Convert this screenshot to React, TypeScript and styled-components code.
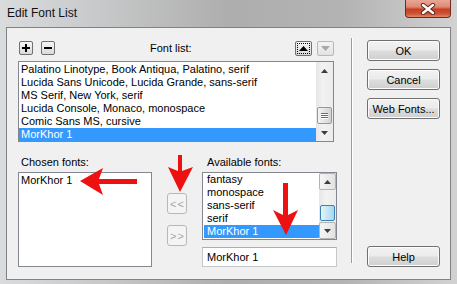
import React from 'react';
import styled, { createGlobalStyle } from 'styled-components';

const Global = createGlobalStyle`
  html, body { margin: 0; padding: 0; background: #fff; }
  body { font-family: "Liberation Sans", Arial, sans-serif; font-size: 11px; color: #000; }
  * { box-sizing: border-box; }
`;

const Window = styled.div`
  position: relative;
  width: 457px;
  height: 284px;
  display: flex;
  flex-direction: column;
  overflow: hidden;
  background: linear-gradient(to right, #d9dbdd 0%, #c9cacb 20%, #aeaeae 50%, #b3b3b3 75%, #d2d2d2 100%);
`;

const TitleBar = styled.div`
  height: 27px;
  display: flex;
  align-items: flex-start;
  padding-left: 7px;
  flex-shrink: 0;
`;

const Title = styled.div`
  margin-top: 6px;
  font-size: 12px;
  line-height: 14px;
  color: #111;
`;

const CloseButton = styled.div`
  margin-left: auto;
  margin-right: 6px;
  width: 46px;
  height: 18px;
  border: 1px solid #6e2a1e;
  border-top: none;
  border-radius: 0 0 4px 4px;
  background: linear-gradient(#e9a796 0%, #de8a73 40%, #c83e24 55%, #cc5336 80%, #e3876a 100%);
  display: flex;
  align-items: center;
  justify-content: center;
`;

const Client = styled.div`
  flex: 1;
  margin: 0 6px 5px 6px;
  border: 1px solid #7f8388;
  background: #f0f0f0;
  display: flex;
  padding: 12px 9px 12px 11px;
`;

const LeftCol = styled.div`
  width: 319px;
  flex-shrink: 0;
  display: flex;
  flex-direction: column;
`;

const Separator = styled.div`
  flex-shrink: 0;
  align-self: flex-start;
  margin: -2px 14px 0 14px;
  width: 2px;
  height: 225px;
  border-left: 1px solid #9d9d9d;
  border-right: 1px solid #ffffff;
`;

const RightCol = styled.div`
  width: 73px;
  flex-shrink: 0;
  display: flex;
  flex-direction: column;
  gap: 8px;
`;

const PushButton = styled.button<{ $bottom?: boolean }>`
  height: 21px;
  width: 73px;
  padding: 0;
  margin-top: ${(p) => (p.$bottom ? 'auto' : '0')};
  border: 1px solid #707070;
  border-radius: 3px;
  background: linear-gradient(#f2f2f2 0%, #ebebeb 48%, #dddddd 52%, #cfcfcf 100%);
  box-shadow: inset 0 0 0 1px #fcfcfc;
  font-family: "Liberation Sans", Arial, sans-serif;
  font-size: 11px;
  color: #000;
`;

const TopRow = styled.div`
  height: 16px;
  display: flex;
  align-items: center;
  padding-right: 3px;
`;

const SmallButton = styled.div<{ $first?: boolean }>`
  width: 14px;
  height: 14px;
  margin-left: ${(p) => (p.$first ? '1px' : '8px')};
  border: 1px solid #707070;
  border-radius: 2px;
  background: linear-gradient(#f6f6f6, #dadada);
  display: flex;
  align-items: center;
  justify-content: center;
`;

const Label = styled.div<{ $offset?: number }>`
  height: 13px;
  line-height: 13px;
  margin-left: ${(p) => p.$offset ?? 0}px;
  margin-bottom: 3px;
  white-space: nowrap;
`;

const TopLabel = styled(Label)`
  margin-bottom: 0;
`;

const OrderButton = styled.div<{ $disabled?: boolean; $gap?: boolean }>`
  width: 17px;
  height: 15px;
  margin-left: ${(p) => (p.$gap ? '5px' : 'auto')};
  border: 1px solid ${(p) => (p.$disabled ? '#b5b9bc' : '#707070')};
  border-radius: 2px;
  background: ${(p) => (p.$disabled ? 'linear-gradient(#f4f4f4, #e2e2e2)' : 'linear-gradient(#f6f6f6, #d8d8d8)')};
  outline: ${(p) => (p.$disabled ? 'none' : '1px dotted #000')};
  outline-offset: -3px;
  display: flex;
  align-items: center;
  justify-content: center;
`;

const ListBox = styled.div<{ $h: number; $w: number }>`
  width: ${(p) => p.$w}px;
  height: ${(p) => p.$h}px;
  border: 1px solid #828790;
  background: #fff;
  display: flex;
`;

const FontListBox = styled(ListBox)`
  margin-top: 5px;
`;

const Rows = styled.div<{ $pad: number }>`
  flex: 1;
  padding-top: ${(p) => p.$pad}px;
  overflow: hidden;
`;

const Row = styled.div<{ $selected?: boolean; $inset?: boolean }>`
  height: 13px;
  line-height: 13px;
  padding-left: ${(p) => (p.$inset ? '3px' : '2px')};
  margin-left: ${(p) => (p.$inset ? '1px' : '0')};
  white-space: nowrap;
  background: ${(p) => (p.$selected ? '#3399ff' : 'transparent')};
  color: ${(p) => (p.$selected ? '#fff' : '#000')};
`;

const ScrollBar = styled.div`
  width: 17px;
  display: flex;
  flex-direction: column;
  background: linear-gradient(to right, #e6e6e6, #f2f2f2 40%, #ececec);
`;

const ScrollArrow = styled.div<{ $boxed?: boolean }>`
  height: 17px;
  display: flex;
  align-items: center;
  justify-content: center;
  border: 1px solid ${(p) => (p.$boxed ? '#b4b4b4' : 'transparent')};
  border-radius: 2px;
  background: ${(p) => (p.$boxed ? 'linear-gradient(to right, #f6f6f6, #e2e2e2)' : 'transparent')};
`;

const Track = styled.div`
  flex: 1;
  position: relative;
`;

const Thumb = styled.div<{ $hover?: boolean; $top: number; $h: number }>`
  position: absolute;
  left: 1px;
  right: 1px;
  top: ${(p) => p.$top}px;
  height: ${(p) => p.$h}px;
  border: 1px solid ${(p) => (p.$hover ? '#3c7fb1' : '#979797')};
  border-radius: 2px;
  background: ${(p) =>
    p.$hover
      ? 'linear-gradient(to right, #e3f4fc, #c4e5f6 50%, #a8d7f2)'
      : 'linear-gradient(to right, #f4f4f4, #e4e4e4 50%, #d2d2d2)'};
  display: flex;
  flex-direction: column;
  align-items: center;
  justify-content: center;
  gap: 1px;
`;

const Grip = styled.div`
  width: 7px;
  height: 1px;
  background: #6a6a6a;
  box-shadow: 0 1px 0 #fff;
`;

const BottomGrid = styled.div`
  margin-top: 14px;
  display: grid;
  grid-template-columns: 134px 20px 135px;
  column-gap: 15px;
`;

const Column = styled.div`
  display: flex;
  flex-direction: column;
`;

const MoveColumn = styled.div`
  display: flex;
  flex-direction: column;
  padding-top: 37px;
  gap: 11px;
`;

const MoveButton = styled.div`
  width: 20px;
  height: 21px;
  border: 1px solid #b5b9bc;
  border-radius: 3px;
  background: #f4f4f4;
  color: #a6a6a6;
  display: flex;
  align-items: center;
  justify-content: center;
  font-size: 11px;
  letter-spacing: 1px;
  padding-left: 1px;
`;

const TextInput = styled.div`
  margin-top: 7px;
  height: 20px;
  border: 1px solid #c5c8cc;
  border-top-color: #abadb3;
  background: #fff;
  padding-left: 4px;
  line-height: 18px;
`;

const Overlay = styled.svg`
  position: absolute;
  left: 0;
  top: 0;
  pointer-events: none;
`;

const Tri = ({ up, color = '#3c3c3c', w = 7 }: { up?: boolean; color?: string; w?: number }) => {
  const h = Math.ceil(w / 2);
  return (
    <svg width={w} height={h} viewBox={`0 0 ${w} ${h}`}>
      <polygon points={up ? `0,${h} ${w},${h} ${w / 2},0` : `0,0 ${w},0 ${w / 2},${h}`} fill={color} />
    </svg>
  );
};

type SB = { thumbTop: number; thumbH: number; hover?: boolean; boxed?: boolean; grip?: boolean };

const Scroll = ({ thumbTop, thumbH, hover, boxed, grip }: SB) => (
  <ScrollBar>
    <ScrollArrow $boxed={boxed}>
      <Tri up />
    </ScrollArrow>
    <Track>
      <Thumb $hover={hover} $top={thumbTop} $h={thumbH}>
        {grip && (
          <>
            <Grip />
            <Grip />
            <Grip />
          </>
        )}
      </Thumb>
    </Track>
    <ScrollArrow $boxed={boxed}>
      <Tri />
    </ScrollArrow>
  </ScrollBar>
);

const fontList = [
  'Palatino Linotype, Book Antiqua, Palatino, serif',
  'Lucida Sans Unicode, Lucida Grande, sans-serif',
  'MS Serif, New York, serif',
  'Lucida Console, Monaco, monospace',
  'Comic Sans MS, cursive',
  'MorKhor 1',
];

const available = ['fantasy', 'monospace', 'sans-serif', 'serif', 'MorKhor 1'];

export default function App() {
  return (
    <>
      <Global />
      <Window>
        <TitleBar>
          <Title>Edit Font List</Title>
          <CloseButton>
            <svg width="16" height="12" viewBox="0 0 16 12">
              <path d="M3 2 L13 10 M13 2 L3 10" stroke="#5a2418" strokeWidth="4.2" strokeLinecap="round" />
              <path d="M3 2 L13 10 M13 2 L3 10" stroke="#ffffff" strokeWidth="2.4" strokeLinecap="round" />
            </svg>
          </CloseButton>
        </TitleBar>
        <Client>
          <LeftCol>
            <TopRow>
              <SmallButton $first>
                <svg width="8" height="8" viewBox="0 0 8 8">
                  <path d="M0 4 H8 M4 0 V8" stroke="#000" strokeWidth="2" />
                </svg>
              </SmallButton>
              <SmallButton>
                <svg width="8" height="8" viewBox="0 0 8 8">
                  <path d="M0 4 H8" stroke="#000" strokeWidth="2" />
                </svg>
              </SmallButton>
              <TopLabel $offset={95}>Font list:</TopLabel>
              <OrderButton>
                <Tri up color="#000" w={9} />
              </OrderButton>
              <OrderButton $disabled $gap>
                <Tri color="#a8a8a8" w={9} />
              </OrderButton>
            </TopRow>
            <FontListBox $w={316} $h={81}>
              <Rows $pad={1}>
                {fontList.map((f, i) => (
                  <Row key={f} $selected={i === fontList.length - 1}>
                    {f}
                  </Row>
                ))}
              </Rows>
              <Scroll thumbTop={28} thumbH={17} grip />
            </FontListBox>
            <BottomGrid>
              <Column>
                <Label $offset={3}>Chosen fonts:</Label>
                <ListBox $w={134} $h={95}>
                  <Rows $pad={1}>
                    <Row>MorKhor 1</Row>
                  </Rows>
                </ListBox>
              </Column>
              <MoveColumn>
                <MoveButton>&lt;&lt;</MoveButton>
                <MoveButton>&gt;&gt;</MoveButton>
              </MoveColumn>
              <Column>
                <Label $offset={5}>Available fonts:</Label>
                <ListBox $w={135} $h={68}>
                  <Rows $pad={0}>
                    {available.map((f, i) => (
                      <Row key={f} $inset $selected={i === available.length - 1}>
                        {f}
                      </Row>
                    ))}
                  </Rows>
                  <Scroll thumbTop={15} thumbH={16} hover boxed />
                </ListBox>
                <TextInput>MorKhor 1</TextInput>
              </Column>
            </BottomGrid>
          </LeftCol>
          <Separator />
          <RightCol>
            <PushButton>OK</PushButton>
            <PushButton>Cancel</PushButton>
            <PushButton>Web Fonts...</PushButton>
            <PushButton $bottom>Help</PushButton>
          </RightCol>
        </Client>
        <Overlay width="457" height="284" viewBox="0 0 457 284">
          <polygon points="80,181 103,168 99,179 137,179 137,184 99,184 103,195" fill="#ee1111" />
          <polygon points="178,155 182,155 182,171 193,167 180,192 168,167 178,171" fill="#ee1111" />
          <polygon points="283,183 288,183 288,215 298,210 286,235 273,210 283,215" fill="#ee1111" />
        </Overlay>
      </Window>
    </>
  );
}
